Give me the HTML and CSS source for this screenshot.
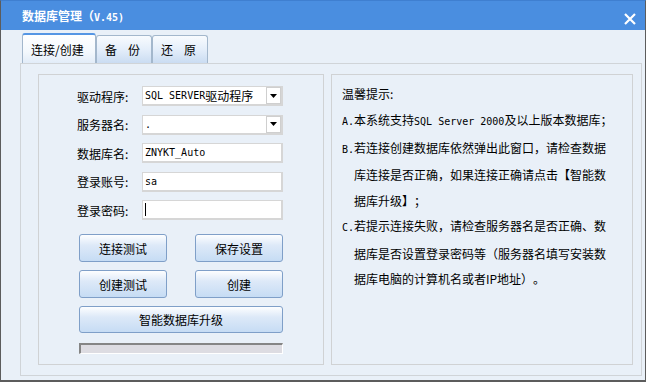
FILE: index.html
```html
<!DOCTYPE html>
<html lang="zh-CN">
<head>
  <meta charset="UTF-8">
  <title>数据库管理</title>
  <link rel="stylesheet" href="styles.css">
</head>
<body>
  <div class="window">
    <div class="titlebar">
      <span class="title">数据库管理（<span class="en">V.45)</span></span>
      <svg class="close" width="12" height="12" viewBox="0 0 12 12">
        <path d="M1 1L11 11M11 1L1 11" stroke="#fff" stroke-width="2.2" fill="none"/>
      </svg>
    </div>

    <!-- Tabs -->
    <div class="tabs">
      <div class="tab active">连接/创建</div>
      <div class="tab spaced">备份</div>
      <div class="tab spaced">还原</div>
    </div>

    <div class="panel">
      <!-- Connection settings -->
      <div class="group conn">
        <div class="form">
          <label>驱动程序:</label>
          <div class="field combo"><span class="en">SQL SERVER</span>驱动程序<span class="arrow"><svg width="7" height="4" viewBox="0 0 7 4"><path d="M0 0H7L3.5 4Z" fill="#000"/></svg></span></div>
          <label>服务器名:</label>
          <div class="field combo"><span class="en">.</span><span class="arrow"><svg width="7" height="4" viewBox="0 0 7 4"><path d="M0 0H7L3.5 4Z" fill="#000"/></svg></span></div>
          <label>数据库名:</label>
          <div class="field"><span class="en">ZNYKT_Auto</span></div>
          <label>登录账号:</label>
          <div class="field"><span class="en">sa</span></div>
          <label>登录密码:</label>
          <div class="field"><span class="caret"></span></div>
        </div>

        <div class="actions">
          <button>连接测试</button>
          <button>保存设置</button>
          <button>创建测试</button>
          <button>创建</button>
          <button class="wide">智能数据库升级</button>
        </div>

        <div class="progress"></div>
      </div>

      <!-- Hints -->
      <div class="group tips">
        <p class="head">温馨提示:</p>
        <p class="item"><span class="en">A.</span>本系统支持<span class="en">SQL Server 2000</span>及以上版本数据库；</p>
        <p class="item"><span class="en">B.</span>若连接创建数据库依然弹出此窗口，请检查数据库连接是否正确，如果连接正确请点击【智能数据库升级】；</p>
        <p class="item"><span class="en">C.</span>若提示连接失败，请检查服务器名是否正确、数据库是否设置登录密码等（服务器名填写安装数据库电脑的计算机名或者IP地址）。</p>
      </div>
    </div>
  </div>
</body>
</html>
```

FILE: styles.css
```css
/* General */
body {
  margin: 0;
  font-family: "Noto Sans CJK SC", "Liberation Sans", sans-serif;
  font-size: 12px;
  color: #000;
  background: #e9f0f8;
  text-spacing-trim: space-all;
}

.en {
  font-family: "DejaVu Sans Mono", monospace;
  font-size: 10px;
}

.window {
  box-sizing: border-box;
  width: 646px;
  height: 382px;
  border: 1px solid #5c5c5c;
  border-top-color: #3f7fd0;
  border-bottom-width: 2px;
  background: #e9f0f8;
}

/* Title bar */
.titlebar {
  display: flex;
  justify-content: space-between;
  align-items: center;
  height: 29px;
  padding: 0 9px 0 21px;
  background: #4a8ee0;
  color: #fff;
  font-weight: bold;
}

.titlebar .en {
  font-weight: bold;
}

.close {
  margin-top: 6px;
}

/* Tabs */
.tabs {
  display: flex;
  align-items: flex-end;
  height: 30px;
  margin: 3px 0 0 21px;
}

.tab {
  box-sizing: border-box;
  display: flex;
  align-items: center;
  height: 28px;
  width: 56px;
  padding-left: 8px;
  border: 1px solid #a3b7cc;
  border-bottom: none;
  border-radius: 3px 3px 0 0;
  background: linear-gradient(#f8fbfe, #e4eefa 50%, #cadcf2);
}

.tab.active {
  width: 74px;
  height: 30px;
  border-top: 2px solid #5596e4;
  background: linear-gradient(#ffffff, #f3f8fd 60%, #e2ecf8);
}

.tab.spaced {
  letter-spacing: 11px;
}

/* Panel */
.panel {
  box-sizing: border-box;
  display: flex;
  gap: 7px;
  height: 313px;
  margin: 0 3px 0 19px;
  padding: 10px 8px 10px 17px;
  border: 1px solid #d0d4d8;
}

.group {
  border: 1px solid #d0d2d4;
}

.conn {
  width: 284px;
}

.tips {
  flex: 1;
  padding: 5px 0 0 10px;
}

/* Form */
.form {
  display: grid;
  grid-template-columns: 65px 141px;
  grid-auto-rows: 20px;
  row-gap: 8.5px;
  padding: 11px 0 0 38px;
}

.form label {
  display: flex;
  align-items: center;
}

.field {
  position: relative;
  box-sizing: border-box;
  display: flex;
  align-items: center;
  padding-left: 2px;
  background: #fff;
  border: 1px solid #d6d6d6;
  border-right-width: 2px;
  border-bottom-width: 2px;
  white-space: nowrap;
}

.combo .arrow {
  position: absolute;
  top: 0;
  right: 0;
  box-sizing: border-box;
  display: flex;
  align-items: center;
  justify-content: center;
  width: 15px;
  height: 17px;
  border: 1px solid #cfcfcf;
  background: #fff;
}

.caret {
  width: 1px;
  height: 13px;
  background: #000;
}

/* Buttons */
.actions {
  display: grid;
  grid-template-columns: 88px 88px;
  grid-template-rows: 28px 28px 27px;
  column-gap: 28px;
  row-gap: 8px;
  margin-top: 14px;
  padding-left: 40px;
}

.actions button {
  font-family: inherit;
  font-size: 12px;
  color: #000;
  padding: 0;
  border: 1px solid #7f9fc8;
  border-radius: 3px;
  background: linear-gradient(#fdfeff, #dde9f8 40%, #c6dcf4);
}

.actions .wide {
  grid-column: 1 / 3;
}

.progress {
  box-sizing: border-box;
  width: 204px;
  height: 11px;
  margin: 10px 0 0 40px;
  background: #dddce2;
  border-top: 2px solid #858585;
  border-left: 2px solid #858585;
  border-right: 1px solid #fff;
  border-bottom: 1px solid #fff;
}

/* Hints */
.tips p {
  margin: 0;
}

.tips .head {
  line-height: 27px;
}

.tips .item {
  width: 260px;
  padding-left: 12px;
  text-indent: -12px;
  line-height: 25.5px;
}
```
